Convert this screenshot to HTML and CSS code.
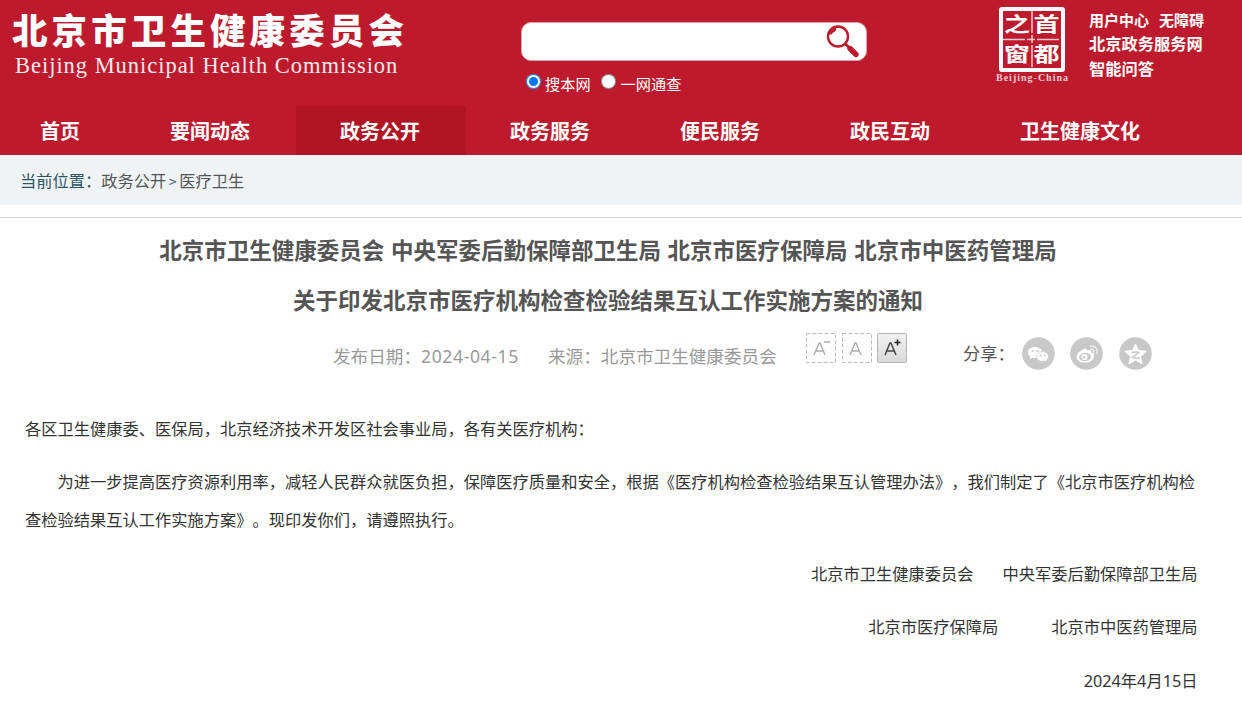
FILE: index.html
```html
<!DOCTYPE html>
<html lang="zh-CN">
<head>
  <meta charset="utf-8">
  <title>北京市卫生健康委员会</title>
  <link rel="stylesheet" href="styles.css">
</head>
<body>

  <header class="header">
    <div class="logo">
      <div class="logo-cn">北京市卫生健康委员会</div>
      <div class="logo-en">Beijing Municipal Health Commission</div>
    </div>

    <form class="search">
      <div class="search-box">
        <input type="text" class="search-input" aria-label="搜索">
        <svg class="search-icon" width="34" height="34" viewBox="0 0 34 34">
          <circle cx="12" cy="11.500" r="10" fill="none" stroke="#bd1a2d" stroke-width="2.400"/>
          <path d="M3.500 9Q5 4 10 3.500L9 6Q6 7 5.500 9Z" fill="#bd1a2d" stroke="#bd1a2d"/>
          <path d="M19 18.500l4 4" stroke="#bd1a2d" stroke-width="2.600"/>
          <path d="M24 23.500l6 6" stroke="#bd1a2d" stroke-width="5.400" stroke-linecap="round"/>
        </svg>
      </div>
      <div class="search-type">
        <label><input type="radio" name="type" checked><span>搜本网</span></label>
        <label><input type="radio" name="type"><span>一网通查</span></label>
      </div>
    </form>

    <svg class="capital" width="74" height="80" viewBox="0 0 74 80">
      <rect x="6" y="2" width="62" height="61" rx="1" fill="none" stroke="#fff" stroke-width="4"/>
      <path d="M37 4v58M8 32.500h58" stroke="#f3c9ce" stroke-width="1.500" stroke-dasharray="22 2 8 2"/>
      <g class="capital-chars">
        <text x="9" y="25" textLength="26" lengthAdjust="spacingAndGlyphs">之</text>
        <text x="38.500" y="25" textLength="26" lengthAdjust="spacingAndGlyphs">首</text>
        <text x="9" y="54.500" textLength="26" lengthAdjust="spacingAndGlyphs">窗</text>
        <text x="38.500" y="54.500" textLength="26" lengthAdjust="spacingAndGlyphs">都</text>
      </g>
      <text class="capital-en" x="1" y="73.500" textLength="72">Beijing-China</text>
    </svg>

    <div class="links">
      <div class="links-small"><a>用户中心</a><a>无障碍</a></div>
      <a>北京政务服务网</a>
      <a>智能问答</a>
    </div>
  </header>

  <nav class="nav">
    <a>首页</a>
    <a>要闻动态</a>
    <a class="active">政务公开</a>
    <a>政务服务</a>
    <a>便民服务</a>
    <a>政民互动</a>
    <a>卫生健康文化</a>
  </nav>

  <div class="position">当前位置：<a>政务公开</a><span class="sep">&gt;</span><a>医疗卫生</a></div>

  <main class="article">
    <h1>北京市卫生健康委员会 中央军委后勤保障部卫生局 北京市医疗保障局 北京市中医药管理局<br>关于印发北京市医疗机构检查检验结果互认工作实施方案的通知</h1>

    <div class="info">
      <div class="date">发布日期：<span class="num">2024-04-15</span></div>
      <div class="source">来源：北京市卫生健康委员会</div>

      <div class="font-size">
        <svg width="30" height="30" viewBox="0 0 30 30">
          <rect class="dash" x=".5" y=".5" width="29" height="29"/>
          <path d="M8 22l5-12h1l5 12M10 18h7M18 9h6" fill="none" stroke="#aaa" stroke-width="1.300"/>
        </svg>
        <svg width="30" height="30" viewBox="0 0 30 30">
          <rect class="dash" x=".5" y=".5" width="29" height="29"/>
          <path d="M8 22l5-12h1l5 12M10 18h7" fill="none" stroke="#aaa" stroke-width="1.300"/>
        </svg>
        <svg width="30" height="30" viewBox="0 0 30 30">
          <defs>
            <linearGradient id="btn" x2="0" y2="1"><stop stop-color="#f2f2f2"/><stop offset="1" stop-color="#d8d8d8"/></linearGradient>
          </defs>
          <rect x=".5" y=".5" width="29" height="29" rx="1" fill="url(#btn)" stroke="#b4b4b4"/>
          <path d="M8 22l5-12h1l5 12M10 18h7" fill="none" stroke="#444" stroke-width="1.500"/>
          <path d="M17.500 9.500h6M20.500 6.500v6" stroke="#222" stroke-width="1.500"/>
        </svg>
      </div>

      <div class="share">
        <span>分享：</span>
        <!-- wechat -->
        <svg width="33" height="33" viewBox="0 0 33 33">
          <circle cx="16.500" cy="16.500" r="16.300" fill="#c8c8c8"/>
          <path d="M13 10c-4 0-7 2.400-7 5.500 0 1.800 1 3.300 2.500 4.200L8 22l2.700-1.300q1.300.3 2.600.3c3.800 0 6.900-2.400 6.900-5.500S17 10 13 10z" fill="#fff"/>
          <path d="M20.500 14.500c3.300 0 6 2.200 6 5 0 1.500-.8 2.700-2 3.600l.5 2-2.300-1.100q-1 .3-2.200.3c-3.300 0-6-2.100-6-4.800s2.700-5 6-5z" fill="#fff" stroke="#c8c8c8" stroke-width=".7"/>
          <g fill="#c8c8c8"><circle cx="10.500" cy="14" r="1"/><circle cx="15.500" cy="14" r="1"/><circle cx="18.500" cy="18.300" r=".9"/><circle cx="22.700" cy="18.300" r=".9"/></g>
        </svg>
        <!-- weibo -->
        <svg width="33" height="33" viewBox="0 0 33 33">
          <circle cx="16.500" cy="16.500" r="16.300" fill="#c8c8c8"/>
          <path d="M14 12c1.500-.8 3-.6 2.900 1.500 2.500-1 5-.8 4.300 1.900 2 .6 3 1.700 3 3.300 0 3.800-4.300 7-9.200 7-4.800 0-8.500-2.300-8.500-5.700 0-3 3.800-6.700 7.500-8z" fill="#fff"/>
          <ellipse cx="15" cy="20" rx="6" ry="4.200" fill="#c8c8c8" transform="rotate(-8 15 20)"/>
          <circle cx="14.500" cy="20" r="3.100" fill="#fff"/>
          <circle cx="13.800" cy="20.600" r="1.300" fill="#c8c8c8"/>
          <path d="M20.500 12.200q4-.3 3.300 3.800M20.500 9q7.500-.3 6.500 7.500" fill="none" stroke="#f0f0f0" stroke-width="1.300" stroke-linecap="round"/>
        </svg>
        <!-- qzone -->
        <svg width="33" height="33" viewBox="0 0 33 33">
          <circle cx="16.500" cy="16.500" r="16.300" fill="#c8c8c8"/>
          <path d="M16.500 7l3.100 6.500 7.600.8-5.700 5.100 1.600 7.500-6.600-3.900-6.600 3.900 1.600-7.500-5.700-5.100 7.600-.8z" fill="#fff" stroke="#fff" stroke-linejoin="round"/>
          <path d="M12.500 15.500q4.500-1 7.500 0l-6.500 5q3.500 1 7.500.3" fill="none" stroke="#c8c8c8" stroke-width="1.500"/>
        </svg>
      </div>
    </div>

    <div class="content">
      <p>各区卫生健康委、医保局，北京经济技术开发区社会事业局，各有关医疗机构：</p>
      <p class="indent">为进一步提高医疗资源利用率，减轻人民群众就医负担，保障医疗质量和安全，根据《医疗机构检查检验结果互认管理办法》，我们制定了《北京市医疗机构检查检验结果互认工作实施方案》。现印发你们，请遵照执行。</p>
      <p class="sign"><span>北京市卫生健康委员会</span><span>中央军委后勤保障部卫生局</span></p>
      <p class="sign sign-wide"><span>北京市医疗保障局</span><span>北京市中医药管理局</span></p>
      <p class="sign sign-date"><span>2024年4月15日</span></p>
    </div>
  </main>

</body>
</html>
```

FILE: styles.css
```css
* {
  box-sizing: border-box;
}
body {
  margin: 0;
  background: #fff;
  color: #333;
  font-family: "Noto Sans CJK SC", sans-serif;
  font-size: 16.25px;
  text-spacing-trim: space-all;
  overflow: hidden;
}

/* header */
.header {
  display: flex;
  height: 106px;
  background: #bd1a2d;
  color: #fff;
}
.logo {
  width: 521px;
  padding: 5px 0 0 12px;
  white-space: nowrap;
}
.logo-cn {
  font-size: 35.5px;
  font-weight: 900;
  line-height: 48px;
  letter-spacing: 4.1px;
}
.logo-en {
  padding: 1px 0 0 3px;
  color: #fbe9eb;
  font-family: "Liberation Serif", serif;
  font-size: 22.5px;
  line-height: 24px;
  letter-spacing: .97px;
}
.search {
  width: 346px;
  padding-top: 22px;
}
.search-box {
  display: flex;
  height: 39px;
  padding: 2px 6px 0 10px;
  background: #fff;
  border: 1px solid #e3a3aa;
  border-radius: 10px;
}
.search-input {
  flex: 1;
  height: 32px;
  border: 0;
  outline: none;
}
.search-type {
  display: flex;
  gap: 10px;
  padding: 12px 0 0 5px;
  font-size: 15.2px;
}
.search-type label {
  display: flex;
  line-height: 21px;
}
.search-type input {
  width: 15px;
  height: 15px;
  margin: 1px 4px 0 0;
}
.search-type label + label input {
  margin-right: 5px;
}
.capital {
  margin: 7px 0 0 128px;
}
.capital-chars {
  fill: #fff;
  font-size: 20px;
  font-weight: 700;
}
.capital-en {
  fill: #f3c9ce;
  font-family: "Liberation Serif", serif;
  font-size: 10px;
  font-weight: 700;
}
.links {
  display: flex;
  flex-direction: column;
  padding: 8px 0 0 20px;
  font-size: 16.25px;
  font-weight: 700;
  line-height: 24.5px;
}
.links-small {
  display: flex;
  gap: 10px;
  font-size: 15px;
  line-height: 23px;
}

/* navigation */
.nav {
  display: flex;
  height: 49px;
  background: #bd1a2d;
  color: #fff;
  font-size: 20px;
  font-weight: 700;
  line-height: 50px;
}
.nav a {
  padding: 0 46px 0 44px;
  white-space: nowrap;
}
.nav a:first-child {
  padding-left: 40px;
}
.nav .active {
  background: #b11524;
}
.position {
  height: 50px;
  padding-left: 20px;
  background: #eff3f6;
  color: #2b5464;
  line-height: 50px;
}
.position a {
  color: #555;
}
.sep {
  display: inline-block;
  width: 13px;
  text-align: center;
  font-size: 14px;
}

/* article */
.article {
  margin-top: 12px;
  padding-top: 6px;
  border-top: 1px solid #d9d9d9;
}
h1 {
  width: 1216px;
  margin: 0;
  color: #555;
  font-size: 22.5px;
  line-height: 50px;
  text-align: center;
  word-spacing: 1.6px;
}
.info {
  display: flex;
  height: 84px;
  margin-top: 2px;
  padding-left: 333px;
  color: #999;
  font-size: 17.6px;
  line-height: 60px;
  white-space: nowrap;
}
.date {
  width: 215px;
}
.source {
  width: 258px;
}
.num {
  font-family: "Noto Sans", sans-serif;
  letter-spacing: .6px;
}
.font-size {
  display: flex;
  gap: 5.5px;
  padding-top: 7px;
}
.dash {
  fill: #fcfcfc;
  stroke: #bbb;
  stroke-dasharray: 4 2;
}
.share {
  display: flex;
  gap: 15.5px;
  align-items: center;
  height: 55px;
  margin-left: 56px;
  color: #555;
}
.share span {
  width: 43px;
  height: 62px;
  font-size: 17.2px;
}
.content {
  width: 1197.5px;
  padding-left: 25px;
  margin-top: -1px;
}
.content p {
  margin: 0 0 15.5px;
  line-height: 38px;
}
.content .indent {
  margin-top: -.5px;
  text-indent: 2em;
}
.content .sign {
  display: flex;
  justify-content: flex-end;
  gap: 29px;
}
.content .sign-wide {
  gap: 53px;
}
.content .sign-date {
  padding-top: 1px;
  font-family: "Noto Sans", "Noto Sans CJK SC", sans-serif;
}
```
